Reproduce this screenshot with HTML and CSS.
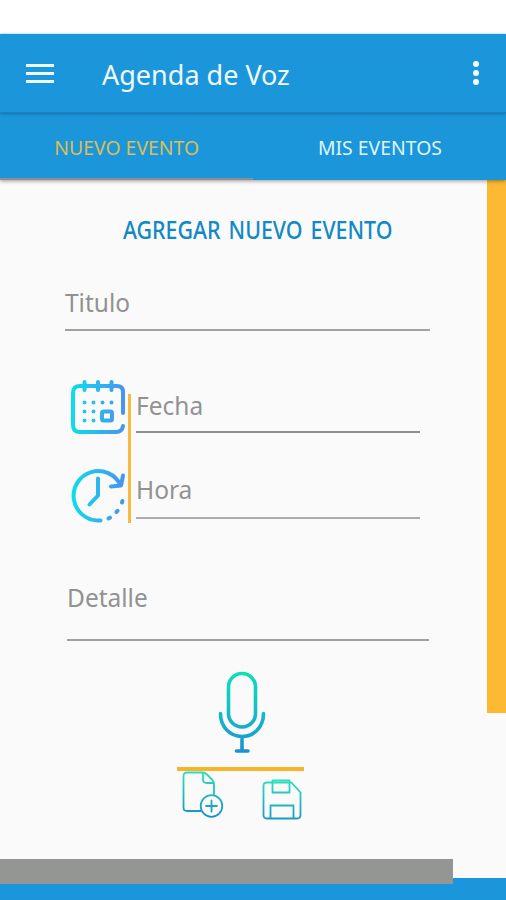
FILE: index.html
```html
<!DOCTYPE html>
<html lang="es">
<head>
    <meta charset="UTF-8">
    <meta name="viewport" content="width=device-width, initial-scale=1.0">
    <title>Agenda de Voz</title>
    <link rel="stylesheet" href="styles.css">
</head>
<body>
    <header class="topbar">
        <div class="menu"><span></span><span></span><span></span></div>
        <h1>Agenda de Voz</h1>
        <div class="more"><span></span><span></span><span></span></div>
    </header>

    <nav class="tabs">
        <a class="tab active"><span class="fit">NUEVO EVENTO</span></a>
        <a class="tab"><span class="fit">MIS EVENTOS</span></a>
    </nav>

    <main class="content">
        <form class="form">
            <h2><span class="fit">AGREGAR NUEVO EVENTO</span></h2>

            <div class="field titulo"><label>Titulo</label></div>

            <div class="fecha-hora">
                <div class="iconos">
                    <svg width="58" height="58" viewBox="0 0 58 58" fill="none" stroke="url(#azul)" stroke-width="4" stroke-linecap="round">
                        <defs>
                            <linearGradient id="azul" gradientUnits="userSpaceOnUse" x1="2" y1="0" x2="56" y2="0">
                                <stop offset="0" stop-color="#0cdfe9"/>
                                <stop offset="1" stop-color="#4b91f0"/>
                            </linearGradient>
                        </defs>
                        <path d="M54 34V13Q54 7 48 7H11Q4 7 4 14V46Q4 53 11 53H47Q53 53 54 47"/>
                        <path d="M15.500 3v8M29 3v8M42.500 3v8"/>
                        <path d="M15.500 23.500h.01M24.500 23.500h.01M33.500 23.500h.01M42.500 23.500h.01M15.500 32.500h.01M24.500 32.500h.01M15.500 41.500h.01M24.500 41.500h.01"/>
                        <rect x="33" y="32.500" width="10" height="9" rx="1.500"/>
                    </svg>
                    <svg width="58" height="58" viewBox="0 0 58 58" fill="none" stroke="url(#azul)" stroke-width="4" stroke-linecap="round" stroke-linejoin="round">
                        <path d="M31.500 53.500H28.500A24.700 24.700 0 1 1 51.500 18"/>
                        <path d="M42 19.500L52 18.500L54 8.500"/>
                        <path d="M29 11.500V28.500L20.500 37.500"/>
                        <path d="M39.500 51.500l1.500 -.8M47.500 45l1 -1.200M53 35.500l.4 -1.500"/>
                    </svg>
                </div>
                <div class="separador"></div>
                <div class="campos">
                    <div class="field fecha"><label>Fecha</label></div>
                    <div class="field hora"><label>Hora</label></div>
                </div>
            </div>

            <div class="field detalle"><label>Detalle</label></div>

            <div class="acciones">
                <svg class="mic" width="48" height="84" viewBox="0 0 48 84" fill="none" stroke="url(#verde)" stroke-width="3.6" stroke-linecap="round">
                    <defs>
                        <linearGradient id="verde" gradientUnits="userSpaceOnUse" x1="0" y1="2" x2="0" y2="82">
                            <stop offset="0" stop-color="#0ce0b5"/>
                            <stop offset=".5" stop-color="#16bccb"/>
                            <stop offset="1" stop-color="#1b91cf"/>
                        </linearGradient>
                    </defs>
                    <rect x="10.500" y="3.500" width="27" height="53.500" rx="13.500"/>
                    <path d="M2.500 43.500C2.500 57 12 66.500 24 66.500S45.500 57 45.500 43.500M24 67V81M18.500 81H30"/>
                </svg>
                <div class="linea"></div>
                <div class="botones">
                    <svg width="42" height="48" viewBox="0 0 42 48" fill="none" stroke="url(#verde2)" stroke-width="1.8" stroke-linejoin="round" stroke-linecap="round">
                        <defs>
                            <linearGradient id="verde2" gradientUnits="userSpaceOnUse" x1="0" y1="1" x2="0" y2="47">
                                <stop offset="0" stop-color="#2ce0bd"/>
                                <stop offset="1" stop-color="#168fc5"/>
                            </linearGradient>
                        </defs>
                        <path d="M19 40H5Q1.500 40 1.500 36.500V5Q1.500 1.500 5 1.500H20.500Q23 1.500 25 3.500L30 8.500Q32 11 32 13V23"/>
                        <path d="M21 2V8.500Q21 12 25 12H31"/>
                        <circle cx="29.500" cy="35" r="10.800"/>
                        <path d="M29.500 29.500v11M24 35h11"/>
                    </svg>
                    <svg class="guardar" width="42" height="42" viewBox="0 0 42 42" fill="none" stroke="url(#verde2)" stroke-width="1.8" stroke-linejoin="round">
                        <path d="M5 3.500H29.500L38.500 13.500V36Q38.500 39.500 35 39.500H5Q1.500 39.500 1.500 36V7Q1.500 3.500 5 3.500Z"/>
                        <path d="M10.500 1.500H27.500V13.500H10.500Z"/>
                        <path d="M8.500 39.500V26.500H31.500V39.500"/>
                    </svg>
                </div>
            </div>
        </form>

        <aside class="lateral"></aside>
    </main>

    <footer class="pie">
        <div class="barra-gris"></div>
    </footer>
</body>
</html>
```
FILE: styles.css
```css
* {
    box-sizing: border-box;
}
body {
    margin: 0;
    padding-top: 34px;
    height: 900px;
    overflow: hidden;
    display: flex;
    flex-direction: column;
    background: #fff;
    font-family: "Noto Sans", sans-serif;
}
h1, h2 {
    margin: 0;
}
.fit {
    display: inline-block;
    white-space: nowrap;
}
.topbar {
    height: 79px;
    flex-shrink: 0;
    display: flex;
    align-items: center;
    padding: 0 26px;
    background: #1c96da;
    border-bottom: 1px solid #1b80b9;
    box-shadow: 0 1px 3px #176fa3;
    z-index: 1;
}
.menu {
    width: 28px;
    display: flex;
    flex-direction: column;
    gap: 5px;
}
.menu span {
    height: 3px;
    background: #eef9fd;
}
.topbar h1 {
    flex: 1;
    margin-left: 48px;
    padding-top: 3px;
    font-size: 27px;
    line-height: 36px;
    font-weight: 400;
    color: #eef9fe;
}
.more {
    display: flex;
    flex-direction: column;
    gap: 3px;
    margin-right: 1px;
}
.more span {
    width: 6px;
    height: 6px;
    border-radius: 50%;
    background: #f5fcff;
}
.tabs {
    height: 67px;
    flex-shrink: 0;
    display: flex;
    background: #1c96da;
    box-shadow: 0 1px 4px rgba(0, 0, 0, 0.4);
    position: relative;
}
.tab {
    width: 50%;
    text-align: center;
    font-size: 20px;
    line-height: 70px;
    height: 67px;
    color: #dff5fc;
}
.tab .fit {
    transform: scaleX(0.97);
}
.tab.active {
    color: #d9bf57;
    border-bottom: 2px solid #8d8f8c;
}
.content {
    height: 698px;
    flex-shrink: 0;
    display: flex;
    justify-content: space-between;
    background: #fafafa;
}
.form {
    width: 430px;
    padding-left: 65px;
}
.form h2 {
    height: 36px;
    margin: 32px 0 0 58px;
    font-size: 26px;
    line-height: 35px;
    font-weight: 500;
    word-spacing: 3px;
    color: #1189c6;
}
.form h2 .fit {
    transform: scaleX(0.822);
    transform-origin: left center;
}
.field {
    display: flex;
    align-items: flex-end;
    border-bottom: 2px solid #a0a0a0;
    color: #929292;
    font-size: 24.5px;
    line-height: 34px;
}
.titulo {
    height: 44px;
    margin-top: 39px;
    padding-bottom: 9px;
}
.fecha-hora {
    display: flex;
    margin-top: 48px;
    padding: 0 10px 0 4px;
}
.iconos {
    width: 58px;
    display: flex;
    flex-direction: column;
    gap: 30px;
}
.separador {
    width: 3px;
    height: 129px;
    margin: 15px 0 0 1px;
    background: #f7ba3e;
}
.campos {
    flex: 1;
    margin-left: 5px;
}
.fecha {
    height: 54px;
    padding-bottom: 8px;
    border-bottom-color: #8f8f8f;
}
.hora {
    height: 86px;
    padding-bottom: 10px;
    border-bottom-color: #acacac;
}
.detalle {
    height: 60px;
    margin: 56px 1px 0 2px;
    padding-bottom: 24px;
}
.acciones {
    width: 127px;
    margin: 29px 0 0 112px;
    display: flex;
    flex-direction: column;
}
.mic {
    margin-left: 41px;
}
.linea {
    height: 4px;
    margin-top: 13px;
    background: #f5b429;
}
.botones {
    display: flex;
    align-items: flex-start;
    padding-left: 5px;
    gap: 38px;
}
.guardar {
    margin-top: 8px;
}
.lateral {
    width: 19px;
    height: 533px;
    background: #fdb933;
}
.pie {
    height: 22px;
    flex-shrink: 0;
    position: relative;
    background: #1c96da;
}
.barra-gris {
    position: absolute;
    left: 0;
    top: -19px;
    width: 453px;
    height: 25px;
    background: #949694;
}
```
